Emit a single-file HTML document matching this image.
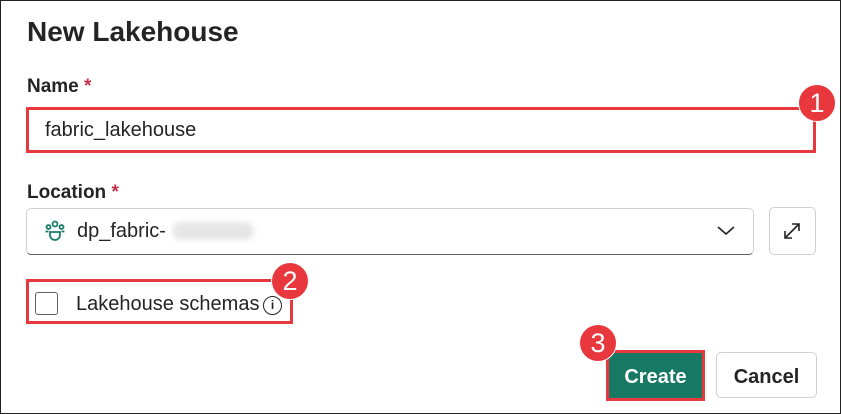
<!DOCTYPE html><html><head><style>
body{margin:0;width:841px;height:414px;overflow:hidden;background:#fff;font-family:"Liberation Sans",sans-serif;color:#242424;position:relative}
.frame{position:absolute;left:0;top:0;width:839px;height:412px;border:1px solid #222}
.a{position:absolute}
.badge{position:absolute;width:36px;height:36px;border-radius:50%;background:#e8383d;color:#fff;font-size:27px;text-align:center;line-height:36px;border:1px solid #fff}
.red{position:absolute;border:3px solid #e8383d;box-sizing:border-box}
</style></head><body><div class="frame"></div>
<div class="a" style="left:27px;top:16px;font-size:28px;font-weight:bold;color:#242424">New Lakehouse</div>
<div class="a" style="left:27px;top:76px;font-size:19px;font-weight:bold">Name <span style="color:#c4314b">*</span></div>
<div class="red" style="left:26px;top:107px;width:790px;height:46px"></div>
<div class="a" style="left:45px;top:119px;font-size:20px">fabric_lakehouse</div>
<div class="badge" style="left:798px;top:84px">1</div>
<div class="a" style="left:27px;top:182px;font-size:19px;font-weight:bold">Location <span style="color:#c4314b">*</span></div>
<div class="a" style="left:26px;top:208px;width:728px;height:47px;border:1px solid #d1d1d1;border-bottom-color:#616161;border-radius:5px;box-sizing:border-box"></div>
<svg class="a" style="left:44px;top:220px" width="22" height="22" viewBox="0 0 22 22" fill="none" stroke="#1b7b6a" stroke-width="1.8"><circle cx="11" cy="4" r="2.5"/><circle cx="4.5" cy="7" r="2"/><circle cx="17.5" cy="7" r="2"/><path d="M6 12h10v3a5 5 0 0 1-10 0z"/><path d="M1.5 11.5h3M17.5 11.5h3"/></svg>
<div class="a" style="left:77px;top:220px;font-size:20px">dp_fabric-</div>
<div class="a" style="left:172px;top:222px;width:82px;height:18px;background:#e6e6e6;border-radius:9px;filter:blur(3px)"></div>
<svg class="a" style="left:716px;top:224px" width="20" height="14"><path d="M2 3l8 7 8-7" stroke="#242424" stroke-width="1.6" fill="none"/></svg>
<div class="a" style="left:769px;top:207px;width:47px;height:48px;border:1px solid #d1d1d1;border-radius:5px;box-sizing:border-box"></div>
<svg class="a" style="left:782px;top:221px" width="20" height="20" fill="none" stroke="#242424" stroke-width="1.6"><path d="M3 17L17 3M10 3h7v7M3 10v7h7"/></svg>
<div class="red" style="left:26px;top:279px;width:267px;height:45px"></div>
<div class="a" style="left:35px;top:292px;width:23px;height:23px;border:1px solid #616161;border-radius:3px;box-sizing:border-box"></div>
<div class="a" style="left:76px;top:293px;font-size:20px">Lakehouse schemas</div>
<div class="a" style="left:263px;top:296px;width:19px;height:19px;border:1.5px solid #242424;border-radius:50%;box-sizing:border-box;font-size:12px;font-weight:bold;text-align:center;line-height:16px">i</div>
<div class="badge" style="left:271px;top:262px">2</div>
<div class="red" style="left:606px;top:350px;width:99px;height:51px"></div>
<div class="a" style="left:609px;top:353px;width:93px;height:45px;background:#177863;color:#fff;font-size:20px;font-weight:bold;text-align:center;line-height:48px">Create</div>
<div class="badge" style="left:579px;top:324px">3</div>
<div class="a" style="left:716px;top:352px;width:101px;height:46px;border:1px solid #d1d1d1;border-radius:5px;box-sizing:border-box;font-size:20px;font-weight:bold;text-align:center;line-height:48px">Cancel</div>
</body></html>
